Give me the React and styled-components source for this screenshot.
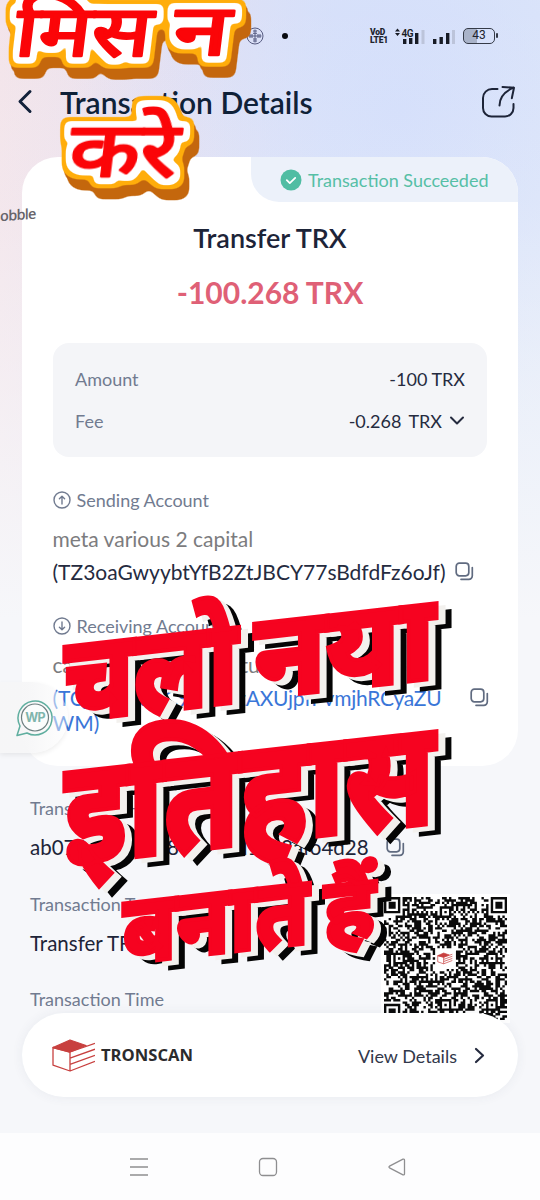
import React from "react";
import styled, { createGlobalStyle } from "styled-components";

const Global = createGlobalStyle`
  * { box-sizing: border-box; }
  html, body { margin: 0; padding: 0; }
  body { font-family: Lato, "Open Sans", sans-serif; color: #1d2438; background: #f6f7fa; }
`;

const Screen = styled.div`
  position: relative;
  width: 540px;
  height: 1200px;
  overflow: hidden;
  display: flex;
  flex-direction: column;
  background:
    linear-gradient(to bottom, rgba(246,247,250,0) 0px, rgba(246,247,250,0.15) 200px, rgba(246,247,250,1) 620px),
    radial-gradient(circle at 400px 110px, #d3defb 0, rgba(211,222,251,0) 330px),
    linear-gradient(to right, #f3e4ea 0, #e6e0f0 35%, #dde4f8 62%, #dfe8f9 100%);
`;

const StatusBar = styled.div`
  height: 72px;
  display: flex;
  align-items: center;
  padding: 0 45px 0 150px;
`;
const StatusLeft = styled.div`
  display: flex;
  align-items: center;
  flex: 1;
`;
const StatusRight = styled.div`
  display: flex;
  align-items: center;
`;
const Vo = styled.div`
  width: 18px;
  margin-right: 7px;
  font: 900 8.5px/8px Roboto, sans-serif;
  letter-spacing: -0.2px;
  color: #20242e;
  white-space: nowrap;
`;
const SignalSlot = styled.span`
  display: flex;
  margin-right: 8px;
`;
const Dot = styled.span`
  width: 6px;
  height: 6px;
  border-radius: 50%;
  background: #080a10;
  margin-left: 18px;
`;
const Battery = styled.div`
  position: relative;
  width: 32px;
  height: 16px;
  border: 1.5px solid #353b48;
  border-radius: 5px;
  background: linear-gradient(to right, #a9b3c9 0 43%, transparent 43%);
  font: 400 12px/13px Roboto, sans-serif;
  text-align: center;
  color: #20242e;
  &::after {
    content: "";
    position: absolute;
    right: -3.5px;
    top: 4px;
    width: 2px;
    height: 5px;
    background: #353b48;
    border-radius: 1px;
  }
`;

const Header = styled.header`
  height: 60px;
  display: flex;
  align-items: center;
  padding: 0 24px 0 16px;
`;
const Heading = styled.h1`
  flex: 1;
  margin: 0 0 0 26px;
  font-size: 30px;
  line-height: 34px;
  font-weight: 600;
  color: #0f2138;
`;

const Card = styled.section`
  margin: 25px 22px 0;
  height: 609px;
  background: #fff;
  border-radius: 36px;
  overflow: hidden;
  display: flex;
  flex-direction: column;
`;
const Badge = styled.div`
  align-self: flex-end;
  width: 267px;
  height: 45px;
  display: flex;
  align-items: center;
  gap: 6px;
  padding: 0 0 0 29px;
  background: #ecf1fa;
  border-bottom-left-radius: 28px;
  color: #56bfa6;
  font-size: 18px;
  white-space: nowrap;
`;
const Title = styled.h2`
  margin: 19px 0 0;
  text-align: center;
  font-size: 27px;
  line-height: 34px;
  font-weight: 600;
`;
const Total = styled.div`
  margin-top: 19px;
  text-align: center;
  font-size: 30px;
  line-height: 36px;
  font-weight: 700;
  color: #df6076;
`;
const Breakdown = styled.div`
  margin: 33px 31px 0 31px;
  height: 114px;
  padding: 15px 22px 15px;
  border-radius: 16px;
  background: #f4f5f8;
`;
const BreakRow = styled.div`
  display: flex;
  justify-content: space-between;
  align-items: center;
  height: 42px;
  font-size: 18px;
  color: #717b90;
`;
const Value = styled.span`
  display: flex;
  align-items: center;
  gap: 7px;
  word-spacing: ${p => p.$spread || 0}px;
  color: #252b3f;
`;
const Account = styled.div`
  margin: ${p => p.$top}px 0 0 30.5px;
`;
const Label = styled.div`
  display: flex;
  align-items: center;
  gap: 6px;
  font-size: 18px;
  line-height: 26px;
  color: #717b90;
`;
const Name = styled.div`
  margin-top: 12px;
  height: 28px;
  display: flex;
  font-size: 21px;
  line-height: 28px;
  color: #7c7c7e;
  white-space: nowrap;
`;
const Address = styled.div`
  display: flex;
  align-items: center;
  height: ${p => p.$h || 25}px;
  font-size: 21px;
  line-height: 25px;
  color: ${p => (p.$link ? "#3a76d8" : "#252b3f")};
  white-space: nowrap;
`;
const Fixed = styled.span`
  width: ${p => p.$w}px;
  letter-spacing: ${p => p.$ls || 0}px;
`;

const Lower = styled.section`
  display: flex;
  justify-content: space-between;
  height: 247px;
  padding: 29px 30px 0;
`;
const Facts = styled.div`
  width: 390px;
  flex: none;
`;
const FactLabel = styled.div`
  font-size: 18px;
  line-height: 26px;
  color: #717b90;
`;
const FactValue = styled.div`
  display: flex;
  align-items: center;
  margin: 13px 0 30.5px;
  font-size: 20.5px;
  line-height: 26px;
  white-space: nowrap;
`;
const QrBox = styled.div`
  flex: none;
  margin: 99px 0 0 -39px;
  width: 129px;
  height: 129px;
  padding: 3px;
  background: #fff;
`;

const Pill = styled.footer`
  position: relative;
  margin: 0 22px;
  height: 84px;
  flex: none;
  border-radius: 42px;
  background: #fff;
  box-shadow: 0 0 12px rgba(60, 70, 100, 0.07);
  display: flex;
  align-items: center;
  padding: 0 33px 0 30px;
`;
const Brand = styled.span`
  flex: 1;
  margin-left: 6px;
  font: 700 16.6px/20px "Open Sans", sans-serif;
  color: #2b2b2d;
`;
const View = styled.span`
  font-size: 18px;
  margin: 1px 17px 0 0;
  color: #32384a;
`;
const Nav = styled.nav`
  margin-top: 36px;
  height: 67px;
  background: #fdfdfe;
  display: flex;
  align-items: center;
  justify-content: space-between;
  padding: 0 133px 0 129px;
`;

const Floating = styled.div`
  position: absolute;
  left: 0;
  top: 682px;
  width: 68px;
  height: 71px;
  border-radius: 0 36px 36px 0;
  background: linear-gradient(to right, rgba(246,246,247,0.95) 40%, rgba(252,252,252,0.35));
  box-shadow: 0 2px 5px rgba(0,0,0,0.07);
  display: flex;
  align-items: center;
  padding-left: 15px;
`;
const Watermark = styled.div`
  position: absolute;
  left: 0;
  top: 206px;
  font: 600 14.5px/18px "Open Sans", sans-serif;
  letter-spacing: -0.7px;
  color: #66646a;
  transform: rotate(-4deg) skewX(-4deg);
`;
const Stickers = styled.svg`
  position: absolute;
  inset: 0;
`;
const Brush = styled.text`
  font-family: "Noto Sans Devanagari", "Noto Sans", sans-serif;
  font-weight: 400;
  fill: #fb0508;
  stroke: #fb0508;
  stroke-width: 2.6px;
  stroke-linejoin: round;
`;
const Block = styled.text`
  font-family: "Noto Sans Devanagari", "Noto Sans", sans-serif;
  font-weight: 800;
  fill: #f60320;
  stroke: #f60320;
  stroke-width: 4px;
`;

const CopyIcon = () => (
  <svg width="19" height="19" viewBox="0 0 19 19" fill="none" stroke="#606b80" strokeWidth="1.7" strokeLinecap="round">
    <rect x="1.2" y="1.2" width="12.6" height="12.6" rx="3.2" />
    <path d="M17.3 5.5v8.3a3.5 3.5 0 0 1-3.5 3.5H6" />
  </svg>
);

const ArrowCircle = ({ down }) => (
  <svg width="18" height="18" viewBox="0 0 18 18" fill="none" stroke="#717b90" strokeWidth="1.4" strokeLinecap="round" strokeLinejoin="round">
    <circle cx="9" cy="9" r="8" />
    <path d={down ? "M9 5v7.600M6.400 10.200 9 12.800l2.600-2.600" : "M9 13V5.400M6.400 7.800 9 5.200l2.600 2.600"} />
  </svg>
);

const Cube = ({ width, height }) => (
  <svg width={width} height={height} viewBox="0 0 43 33" fill="none" stroke="#c8403f" strokeWidth="1.3" strokeLinejoin="round">
    <path d="M1 8.500 18 1l16 5.500L18 13z" fill="#c8403f" />
    <path d="M1 8.500v17.600L18 32V13zM18 13l25-8.600M18 19.200l25-9M18 25.400l25-9M18 32l25-9.600" />
  </svg>
);

const N = 53;
const inFinder = (x, y) => (x < 8 && y < 8) || (x > N - 9 && y < 8) || (x < 8 && y > N - 9);
const finderDark = (x, y) => {
  const fx = x > N - 9 ? x - (N - 7) : x;
  const fy = y > N - 9 ? y - (N - 7) : y;
  if (fx < 0 || fy < 0 || fx > 6 || fy > 6) return false;
  const d = Math.max(Math.abs(fx - 3), Math.abs(fy - 3));
  return d !== 2;
};
const buildModules = () => {
  const centers = [[26, 6], [6, 26], [46, 26], [26, 46], [46, 46]];
  let seed = 90731;
  let d = "";
  for (let y = 0; y < N; y++) {
    for (let x = 0; x < N; x++) {
      seed = (seed * 48271) % 2147483647;
      let dark = (seed / 2147483647) > 0.46;
      if (inFinder(x, y)) dark = finderDark(x, y);
      else if (x === 6 || y === 6) dark = (x + y) % 2 === 0;
      for (const [cx, cy] of centers) {
        const r = Math.max(Math.abs(x - cx), Math.abs(y - cy));
        if (r <= 2) dark = r !== 1;
      }
      if (Math.abs(x - 26) < 5 && Math.abs(y - 26) < 5) dark = false;
      if (dark) d += `M${x} ${y}h1.030v1.030h-1.030z`;
    }
  }
  return d;
};
const modules = buildModules();

const Qr = () => (
  <svg width="123" height="123" viewBox="0 0 53 53">
    <path d={modules} fill="#0b0b0b" />
    <g transform="translate(23 24) scale(0.15)" fill="none" stroke="#c8403f" strokeWidth="2">
      <path d="M1 8.500 18 1l16 5.500L18 13z" fill="#c8403f" />
      <path d="M1 8.500v17.600L18 32V13zM18 13l25-8.600M18 19.200l25-9M18 25.400l25-9M18 32l25-9.600" />
    </g>
  </svg>
);

const Signal = ({ network }) => (
  <svg width={network ? 30 : 22} height="18" viewBox={network ? "0 0 30 18" : "0 0 22 18"} fill="#171b25">
    {network ? (
      <>
        <path d="M0 4.400 2.500 1.500 5 4.400zM0 6 2.500 8.900 5 6z" />
        <rect x="8" y="12" width="3.400" height="5" />
        <rect x="14" y="11" width="3.400" height="6" />
        <rect x="20" y="6" width="3.400" height="11" />
        <rect x="26.500" y="3" width="3" height="14" fill="#bcc4da" />
        <text x="6.500" y="9.500" fontFamily="Roboto" fontSize="10" fontWeight="600" letterSpacing="-0.400">4G</text>
      </>
    ) : (
      <>
        <rect x="0" y="12" width="3.400" height="5" />
        <rect x="6.500" y="10" width="3.400" height="7" />
        <rect x="13" y="6" width="3.400" height="11" />
        <rect x="19" y="3" width="3" height="14" fill="#bcc4da" />
      </>
    )}
  </svg>
);

const blocks = [
  { t: "चलो", x: 64, y: 722, w: 174, size: 121 },
  { t: "नया", x: 254, y: 699, w: 181, size: 121 },
  { t: "इतिहास", x: 64, y: 865, w: 371, size: 148 },
  { t: "बनाते", x: 123, y: 964, w: 186, size: 97 },
  { t: "हैं", x: 324, y: 940, w: 51, size: 86 },
];
const brushes = [
  { t: "मिस", x: 13, y: 56, w: 136, size: 71 },
  { t: "न", x: 171, y: 55, w: 56, size: 71 },
  { t: "करे", x: 67, y: 176, w: 108, size: 77 },
];

export default function App() {
  return (
    <>
      <Global />
      <Screen>
        <StatusBar>
          <StatusLeft>
            <svg width="96" height="18" viewBox="0 0 96 18" fill="none" stroke="#101420" strokeWidth="2">
              <path d="M4 5a4.500 4.500 0 0 1-1 9" />
              <circle cx="83" cy="11" r="1" />
            </svg>
            <svg width="18" height="18" viewBox="0 0 18 18" fill="none" stroke="#575c82" strokeWidth="1">
              <circle cx="9" cy="9" r="8" />
              <path d="M9 2.500v13M2.500 9h13M7 4h4M7 6.300h4M7 12h4M7 14h4M4 7v4M6 7v4M12 7v4M14 7v4" />
            </svg>
            <Dot />
          </StatusLeft>
          <StatusRight>
            <Vo>VoD<br />LTE1</Vo>
            <SignalSlot><Signal network /></SignalSlot>
            <SignalSlot><Signal /></SignalSlot>
            <Battery>43</Battery>
          </StatusRight>
        </StatusBar>

        <Header>
          <svg width="18" height="26" viewBox="0 0 18 26" fill="none" stroke="#12213a" strokeWidth="3" strokeLinecap="round" strokeLinejoin="round">
            <path d="M14 2.500 4 12.500l10 10" />
          </svg>
          <Heading>Transaction Details</Heading>
          <svg width="34" height="34" viewBox="0 0 34 34" fill="none" stroke="#1d2438" strokeWidth="2" strokeLinecap="round" strokeLinejoin="round">
            <path d="M15.500 4h-5.500a9 9 0 0 0-9 9v10a8.500 8.500 0 0 0 8.500 8.500h13.500a8.500 8.500 0 0 0 8.500-8.500v-4" />
            <path d="M17.500 20.500c0-7 4-13.500 14-18M20.500 2 32 2.700l-2.200 10.500" />
          </svg>
        </Header>

        <Card>
          <Badge>
            <svg width="22" height="22" viewBox="0 0 22 22">
              <circle cx="11" cy="11" r="10.500" fill="#50bda3" />
              <path d="m6.800 11.200 3 2.900 5.400-5.200" fill="none" stroke="#fff" strokeWidth="1.800" strokeLinecap="round" strokeLinejoin="round" />
            </svg>
            Transaction Succeeded
          </Badge>
          <Title>Transfer TRX</Title>
          <Total>-100.268 TRX</Total>
          <Breakdown>
            <BreakRow>Amount<Value>-100 TRX</Value></BreakRow>
            <BreakRow>
              Fee
              <Value $spread={3}>
                -0.268 TRX
                <svg width="16" height="12" viewBox="0 0 16 12" fill="none" stroke="#252b3f" strokeWidth="2" strokeLinecap="round" strokeLinejoin="round">
                  <path d="m2 2.500 6 6 6-6" />
                </svg>
              </Value>
            </BreakRow>
          </Breakdown>
          <Account $top={30}>
            <Label><ArrowCircle />Sending Account</Label>
            <Name>meta various 2 capital</Name>
            <Address $h={36}>
              <Fixed $w={402}>(TZ3oaGwyybtYfB2ZtJBCY77sBdfdFz6oJf)</Fixed>
              <CopyIcon />
            </Address>
          </Account>
          <Account $top={24}>
            <Label><ArrowCircle down />Receiving Account</Label>
            <Name><Fixed $w={188}>capital market</Fixed>tu</Name>
            <Address $link $h={36}>
              <Fixed $w={184}>(TQ7mVLdXC9Nw</Fixed>
              <Fixed $w={233} $ls={-0.25}>zAXUjpfPvmjhRCyaZU</Fixed>
              <CopyIcon />
            </Address>
            <Address $link $h={14}>WM)</Address>
          </Account>
        </Card>

        <Lower>
          <Facts>
            <FactLabel>Transaction Hash</FactLabel>
            <FactValue>
              <Fixed $w={206}>ab079c41e7b28d</Fixed>
              <Fixed $w={150}>d1c93afo4d28</Fixed>
              <CopyIcon />
            </FactValue>
            <FactLabel>Transaction Type</FactLabel>
            <FactValue>Transfer TRX</FactValue>
            <FactLabel>Transaction Time</FactLabel>
          </Facts>
          <QrBox><Qr /></QrBox>
        </Lower>

        <Pill>
          <Cube width={43} height={33} />
          <Brand>TRONSCAN</Brand>
          <View>View Details</View>
          <svg width="11" height="17" viewBox="0 0 11 17" fill="none" stroke="#252b3f" strokeWidth="2.200" strokeLinecap="round" strokeLinejoin="round">
            <path d="m2 2 7 6.500L2 15" />
          </svg>
        </Pill>

        <Nav>
          <svg width="20" height="20" viewBox="0 0 20 20" stroke="#8e8e90" strokeWidth="1.300">
            <path d="M1 2h18M1 10h18M1 18h18" />
          </svg>
          <svg width="20" height="20" viewBox="0 0 20 20" fill="none" stroke="#8e8e90" strokeWidth="1.300">
            <rect x="1.500" y="1.500" width="17" height="17" rx="3.500" />
          </svg>
          <svg width="20" height="20" viewBox="0 0 20 20" fill="none" stroke="#8e8e90" strokeWidth="1.300" strokeLinejoin="round">
            <path d="M16 2.200 2.500 9.200q-1 .8 0 1.600L16 17.800q1.500.4 1.500-1V3.200q0-1.400-1.500-1z" />
          </svg>
        </Nav>

        <Watermark>obble</Watermark>

        <Floating>
          <svg width="40" height="40" viewBox="0 0 40 40" fill="none">
            <path d="M5 28A17 17 0 1 1 12 35L2 37.500z" stroke="#5fae9f" strokeWidth="1.500" strokeLinejoin="round" />
            <circle cx="20" cy="19.500" r="13.500" stroke="#6d7f80" strokeWidth="1.200" fill="#fbfcfc" />
            <text x="20" y="24" textAnchor="middle" fontFamily="Inter, sans-serif" fontSize="12.500" fontWeight="700" fill="#7fb5ac" letterSpacing="-0.800">WP</text>
          </svg>
        </Floating>

        <Stickers width="540" height="1200" viewBox="0 0 540 1200">
          <defs>
            <filter id="bubble" filterUnits="userSpaceOnUse" x="-20" y="-40" width="300" height="280" colorInterpolationFilters="sRGB">
              <feMorphology in="SourceAlpha" operator="dilate" radius="5" />
              <feGaussianBlur stdDeviation="2.500" />
              <feComponentTransfer result="w"><feFuncA type="linear" slope="7" intercept="-1.500" /></feComponentTransfer>
              <feMorphology in="SourceAlpha" operator="dilate" radius="9" />
              <feGaussianBlur stdDeviation="3.500" />
              <feComponentTransfer result="o"><feFuncA type="linear" slope="8" intercept="-2.200" /></feComponentTransfer>
              <feFlood floodColor="#fff" /><feComposite in2="w" operator="in" result="white" />
              <feFlood floodColor="#ffad0b" /><feComposite in2="o" operator="in" result="orange" />
              <feOffset in="o" dx="2" dy="5" result="o1" />
              <feOffset in="o" dx="5" dy="11" result="o2" />
              <feMerge result="om"><feMergeNode in="o1" /><feMergeNode in="o2" /></feMerge>
              <feFlood floodColor="#c4670d" /><feComposite in2="om" operator="in" result="brown" />
              <feMerge>
                <feMergeNode in="brown" /><feMergeNode in="orange" /><feMergeNode in="white" /><feMergeNode in="SourceGraphic" />
              </feMerge>
            </filter>
            <filter id="offset" filterUnits="userSpaceOnUse" x="30" y="580" width="440" height="420" colorInterpolationFilters="sRGB">
              <feOffset in="SourceAlpha" dx="7" dy="4" result="a" />
              <feOffset in="SourceAlpha" dx="13" dy="8" result="b" />
              <feFlood floodColor="#f3f1ee" /><feComposite in2="a" operator="in" result="white" />
              <feFlood floodColor="#050505" /><feComposite in2="b" operator="in" result="black" />
              <feMerge>
                <feMergeNode in="black" /><feMergeNode in="white" /><feMergeNode in="SourceGraphic" />
              </feMerge>
            </filter>
          </defs>
          <g filter="url(#bubble)">
            {brushes.map(b => (
              <Brush key={b.t} fontSize={b.size} textLength={b.w} lengthAdjust="spacingAndGlyphs" transform={`translate(${b.x} ${b.y}) skewX(-7)`}>{b.t}</Brush>
            ))}
          </g>
          <g filter="url(#offset)">
            {blocks.map(b => (
              <Block key={b.t} fontSize={b.size} textLength={b.w} lengthAdjust="spacingAndGlyphs" transform={`translate(${b.x} ${b.y}) skewY(-6.400)`}>{b.t}</Block>
            ))}
          </g>
        </Stickers>
      </Screen>
    </>
  );
}
